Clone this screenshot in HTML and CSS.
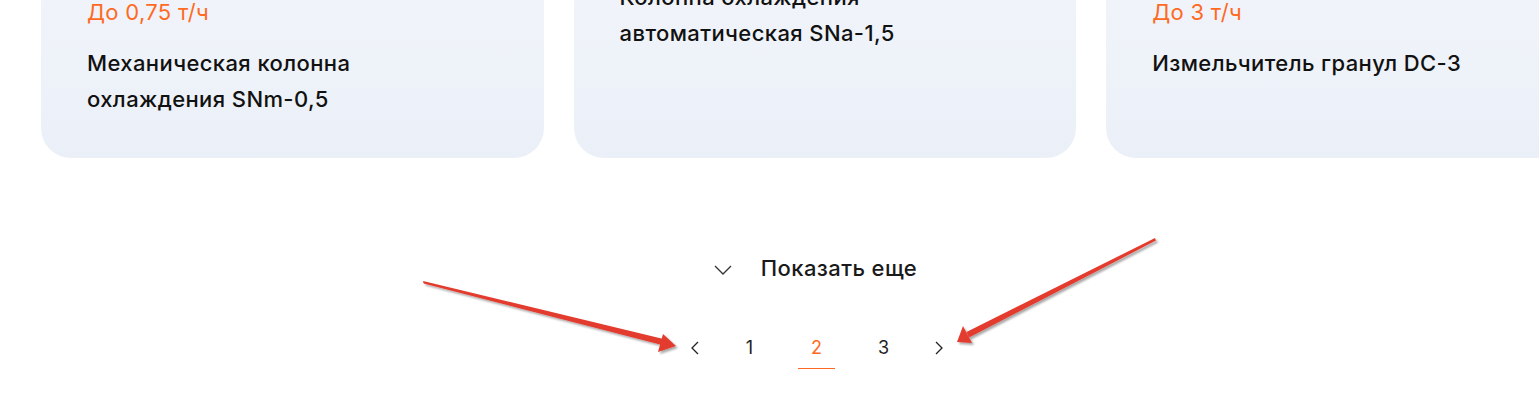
FILE: index.html
```html
<!DOCTYPE html>
<html lang="ru">
<head>
<meta charset="utf-8">
<title>Каталог</title>
<link rel="stylesheet" href="styles.css">
</head>
<body>
<div class="page">
  <div class="cards">
    <div class="card">
      <div class="price">До 0,75 т/ч</div>
      <div class="title">Механическая колонна<br>охлаждения SNm-0,5</div>
    </div>
    <div class="card">
      <div class="title title--up">Колонна охлаждения<br>автоматическая SNa-1,5</div>
    </div>
    <div class="card">
      <div class="price">До 3 т/ч</div>
      <div class="title">Измельчитель гранул DC-3</div>
    </div>
  </div>

  <div class="more">
    <svg class="more__icon" width="18" height="10" viewBox="0 0 18 10"><path d="M1 1 L9 9 L17 1" fill="none" stroke="#333" stroke-width="1.3"/></svg>
    <span class="more__text">Показать еще</span>
  </div>

  <nav class="pager">
    <span class="pager__item pager__arrow"><svg width="10" height="16" viewBox="0 0 10 16"><path d="M8 2 L2 8 L8 14" fill="none" stroke="#222" stroke-width="1.3"/></svg></span>
    <span class="pager__item">1</span>
    <span class="pager__item pager__item--active">2</span>
    <span class="pager__item">3</span>
    <span class="pager__item pager__arrow"><svg width="10" height="16" viewBox="0 0 10 16"><path d="M2 2 L8 8 L2 14" fill="none" stroke="#222" stroke-width="1.3"/></svg></span>
  </nav>

  <svg class="annot" width="1539" height="412" viewBox="0 0 1539 412">
    <defs>
      <filter id="sh" x="-10%" y="-10%" width="120%" height="120%">
        <feGaussianBlur in="SourceAlpha" stdDeviation="1"/>
        <feOffset dx="1.5" dy="2" result="b"/>
        <feComponentTransfer><feFuncA type="linear" slope="0.35"/></feComponentTransfer>
        <feMerge><feMergeNode/><feMergeNode in="SourceGraphic"/></feMerge>
      </filter>
    </defs>
    <g fill="#e33b2e" filter="url(#sh)">
      <polygon points="423,281 423.6,283.6 664,345.5 665.5,339.5"/>
      <polygon points="676,346 663,334 658,352"/>
      <polygon points="1155,238 1156,240.5 969,337.5 966.5,332"/>
      <polygon points="957,342 963,326 972,343"/>
    </g>
  </svg>
</div>
</body>
</html>
```
FILE: styles.css
```css
* { box-sizing: border-box; }
html, body { margin: 0; padding: 0; background: #fff; }
body { font-family: Inter, "Noto Sans", sans-serif; color: #111; overflow: hidden; }
.page { position: relative; width: 1539px; height: 412px; overflow: hidden; }

.cards {
  display: flex;
  gap: 30px;
  padding-left: 41px;
  margin-top: -30px;
}
.card {
  flex: 0 0 502.6px;
  height: 188px;
  padding: 30px 46px 0;
  border-radius: 30px;
  background: linear-gradient(180deg, #f1f4fa 0%, #ebf0f8 100%);
}
.price {
  color: #ff6a23;
  font-size: 22px;
  line-height: 24px;
  letter-spacing: 0.3px;
}
.title {
  margin-top: 21px;
  font-size: 22px;
  line-height: 36px;
  letter-spacing: 0.4px;
  color: #111;
  font-weight: 500;
}
.title--up { margin-top: -21px; }

.more {
  display: flex;
  align-items: center;
  justify-content: center;
  gap: 29px;
  margin-top: 94px;
  padding-left: 92px;
}
.more__icon { margin-top: 4px; }
.more__text { font-size: 22px; line-height: 32px; color: #1a1a1a; font-weight: 500; letter-spacing: 0.4px; }

.pager {
  display: flex;
  justify-content: center;
  gap: 30px;
  margin-top: 47px;
  padding-left: 94px;
}
.pager__item {
  width: 37px;
  height: 38px;
  display: flex;
  align-items: center;
  justify-content: center;
  padding-bottom: 4px;
  font-size: 18px;
  color: #222;
  border-bottom: 1px solid transparent;
}
.pager__arrow { width: 13px; }
.pager__item--active { color: #ff6a23; border-bottom-color: #ff6a23; }

.annot { position: absolute; left: 0; top: 0; pointer-events: none; }
```
